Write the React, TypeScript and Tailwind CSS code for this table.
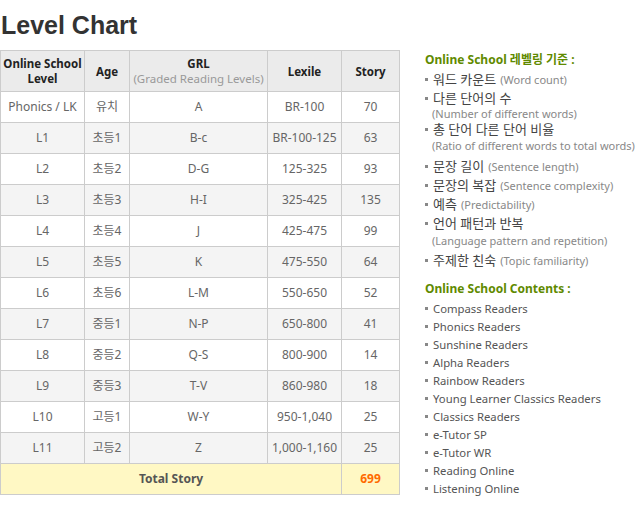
import React from 'react'

const FONT = { fontFamily: '"Noto Sans", "Noto Sans CJK KR", sans-serif' }

const ROWS = [
  ['Phonics / LK', '유치', 'A', 'BR-100', '70'],
  ['L1', '초등1', 'B-c', 'BR-100-125', '63'],
  ['L2', '초등2', 'D-G', '125-325', '93'],
  ['L3', '초등3', 'H-I', '325-425', '135'],
  ['L4', '초등4', 'J', '425-475', '99'],
  ['L5', '초등5', 'K', '475-550', '64'],
  ['L6', '초등6', 'L-M', '550-650', '52'],
  ['L7', '중등1', 'N-P', '650-800', '41'],
  ['L8', '중등2', 'Q-S', '800-900', '14'],
  ['L9', '중등3', 'T-V', '860-980', '18'],
  ['L10', '고등1', 'W-Y', '950-1,040', '25'],
  ['L11', '고등2', 'Z', '1,000-1,160', '25'],
]

// li: row height, wrap: offset of the english line when it sits below
const CRITERIA: { ko: string; en: string; li: string; wrap?: string }[] = [
  { ko: '워드 카운트', en: '(Word count)', li: 'h-[19px]' },
  { ko: '다른 단어의 수', en: '(Number of different words)', li: 'h-[31px]', wrap: '-mt-[2px]' },
  { ko: '총 단어 다른 단어 비율', en: '(Ratio of different words to total words)', li: 'h-[37px]', wrap: '-mt-[1px]' },
  { ko: '문장 길이', en: '(Sentence length)', li: 'h-[19px]' },
  { ko: '문장의 복잡', en: '(Sentence complexity)', li: 'h-[19px]' },
  { ko: '예측', en: '(Predictability)', li: 'h-[19px]' },
  { ko: '언어 패턴과 반복', en: '(Language pattern and repetition)', li: 'h-[37px]', wrap: 'mt-0' },
  { ko: '주제한 친숙', en: '(Topic familiarity)', li: 'h-[19px]' },
]

const CONTENTS = [
  'Compass Readers',
  'Phonics Readers',
  'Sunshine Readers',
  'Alpha Readers',
  'Rainbow Readers',
  'Young Learner Classics Readers',
  'Classics Readers',
  'e-Tutor SP',
  'e-Tutor WR',
  'Reading Online',
  'Listening Online',
]

function Bullet() {
  return <span className="inline-block w-[3px] h-[3px] bg-[#888] mr-[5px] mb-[3px] align-middle" />
}

function LevelTable() {
  return (
    <table className="table-fixed border-collapse w-[399px] text-[12px] text-[#666]" style={FONT}>
      <colgroup>
        <col className="w-[84px]" />
        <col className="w-[45px]" />
        <col className="w-[138px]" />
        <col className="w-[74px]" />
        <col className="w-[58px]" />
      </colgroup>
      <thead>
        <tr className="h-[41px] bg-[#ebebeb] text-[#222] font-bold text-[11.5px] leading-[15px]">
          <th className="border border-[#ccc] p-0">
            Online School
            <br />
            Level
          </th>
          <th className="border border-[#ccc] p-0">Age</th>
          <th className="border border-[#ccc] p-0">
            GRL
            <br />
            <span className="font-normal text-[#999]">(Graded Reading Levels)</span>
          </th>
          <th className="border border-[#ccc] p-0">Lexile</th>
          <th className="border border-[#ccc] p-0">Story</th>
        </tr>
      </thead>
      <tbody>
        {ROWS.map((r, i) => (
          <tr key={r[0]} className={`h-[31px] ${i % 2 === 1 ? 'bg-[#f4f4f4]' : 'bg-white'}`}>
            {r.map((c, j) => (
              <td key={j} className="border border-[#ccc] p-0 text-center">
                {c}
              </td>
            ))}
          </tr>
        ))}
        <tr className="h-[31px] bg-[#fff8c4]">
          <td colSpan={4} className="border border-[#ccc] p-0 text-center font-bold text-[#555]">
            Total Story
          </td>
          <td className="border border-[#ccc] p-0 text-center font-bold text-[#ff6a00]">699</td>
        </tr>
      </tbody>
    </table>
  )
}

export default function App() {
  return (
    <div className="w-[640px] h-[523px] bg-white overflow-hidden">
      <h1
        className="pl-[1px] pt-[10px] h-[50px] text-[25px] font-bold leading-[30px] text-[#333]"
        style={{ fontFamily: '"Liberation Sans", Arial, sans-serif' }}
      >
        Level Chart
      </h1>
      <div className="flex items-start">
        <LevelTable />
        <div className="ml-[25px] text-[12px] text-[#555]" style={FONT}>
          <div className="mt-[1px] h-[18px] leading-[18px] font-bold text-[#5f8a00] text-[12px]">
            Online School 레벨링 기준 :
          </div>
          <ul className="mt-[1px]">
            {CRITERIA.map((c) => (
              <li key={c.ko} className={`${c.li} leading-[19px]`}>
                <Bullet />
                <span className="text-[13px] text-[#444]">{c.ko}</span>
                {c.wrap ? (
                  <div className={`${c.wrap} pl-[7px] text-[11px] text-[#888] leading-[16px]`}>{c.en}</div>
                ) : (
                  <span className="ml-[4px] text-[11px] text-[#888]">{c.en}</span>
                )}
              </li>
            ))}
          </ul>
          <div className="mt-[10px] h-[18px] leading-[18px] font-bold text-[#5f8a00] text-[12px]">
            Online School Contents :
          </div>
          <ul className="mt-[2px]">
            {CONTENTS.map((c) => (
              <li key={c} className="leading-[18px] text-[11.3px] text-[#555]">
                <Bullet />
                {c}
              </li>
            ))}
          </ul>
        </div>
      </div>
    </div>
  )
}
